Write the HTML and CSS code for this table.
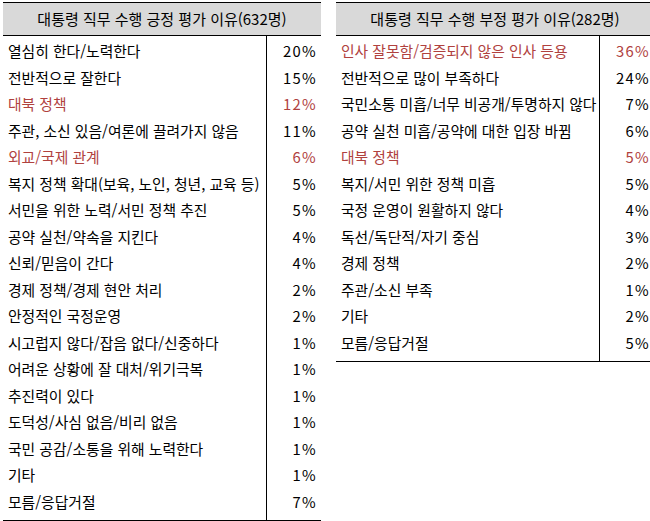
FILE: index.html
```html
<!DOCTYPE html>
<html lang="ko">
<head>
<meta charset="utf-8">
<link rel="stylesheet" href="styles.css">
</head>
<body>
<div class="page">
  <section class="tbl">
    <div class="head">대통령 직무 수행 긍정 평가 이유(632명)</div>
    <div class="body">
      <div class="col labels">
        <div class="row">열심히 한다/노력한다</div>
        <div class="row">전반적으로 잘한다</div>
        <div class="row red">대북 정책</div>
        <div class="row">주관, 소신 있음/여론에 끌려가지 않음</div>
        <div class="row red">외교/국제 관계</div>
        <div class="row">복지 정책 확대(보육, 노인, 청년, 교육 등)</div>
        <div class="row">서민을 위한 노력/서민 정책 추진</div>
        <div class="row">공약 실천/약속을 지킨다</div>
        <div class="row">신뢰/믿음이 간다</div>
        <div class="row">경제 정책/경제 현안 처리</div>
        <div class="row">안정적인 국정운영</div>
        <div class="row">시고럽지 않다/잡음 없다/신중하다</div>
        <div class="row">어려운 상황에 잘 대처/위기극복</div>
        <div class="row">추진력이 있다</div>
        <div class="row">도덕성/사심 없음/비리 없음</div>
        <div class="row">국민 공감/소통을 위해 노력한다</div>
        <div class="row">기타</div>
        <div class="row">모름/응답거절</div>
      </div>
      <div class="col values">
        <div class="row">20%</div>
        <div class="row">15%</div>
        <div class="row red">12%</div>
        <div class="row">11%</div>
        <div class="row red">6%</div>
        <div class="row">5%</div>
        <div class="row">5%</div>
        <div class="row">4%</div>
        <div class="row">4%</div>
        <div class="row">2%</div>
        <div class="row">2%</div>
        <div class="row">1%</div>
        <div class="row">1%</div>
        <div class="row">1%</div>
        <div class="row">1%</div>
        <div class="row">1%</div>
        <div class="row">1%</div>
        <div class="row">7%</div>
      </div>
    </div>
  </section>
  <section class="tbl">
    <div class="head">대통령 직무 수행 부정 평가 이유(282명)</div>
    <div class="body">
      <div class="col labels">
        <div class="row red">인사 잘못함/검증되지 않은 인사 등용</div>
        <div class="row">전반적으로 많이 부족하다</div>
        <div class="row">국민소통 미흡/너무 비공개/투명하지 않다</div>
        <div class="row">공약 실천 미흡/공약에 대한 입장 바뀜</div>
        <div class="row red">대북 정책</div>
        <div class="row">복지/서민 위한 정책 미흡</div>
        <div class="row">국정 운영이 원활하지 않다</div>
        <div class="row">독선/독단적/자기 중심</div>
        <div class="row">경제 정책</div>
        <div class="row">주관/소신 부족</div>
        <div class="row">기타</div>
        <div class="row">모름/응답거절</div>
      </div>
      <div class="col values">
        <div class="row red">36%</div>
        <div class="row">24%</div>
        <div class="row">7%</div>
        <div class="row">6%</div>
        <div class="row red">5%</div>
        <div class="row">5%</div>
        <div class="row">4%</div>
        <div class="row">3%</div>
        <div class="row">2%</div>
        <div class="row">1%</div>
        <div class="row">2%</div>
        <div class="row">5%</div>
      </div>
    </div>
  </section>
</div>
</body>
</html>
```
FILE: styles.css
```css
html, body {
  margin: 0;
  padding: 0;
  overflow: hidden;
  background: #fff;
}
body {
  font-family: "Noto Sans CJK KR", "Noto Sans", sans-serif;
  color: #000;
}
.page {
  display: flex;
  align-items: flex-start;
  gap: 15px;
  padding: 2px 0 0 3px;
  width: 700px;
}
.tbl {
  width: 318px;
  flex: none;
  border-bottom: 1px solid #000;
}
.head {
  height: 32px;
  line-height: 32px;
  background: #d9d9d9;
  border-top: 1px solid #000;
  border-bottom: 1px solid #000;
  text-align: center;
  font-size: 15px;
}
.body {
  display: flex;
}
.col {
  padding: 2px 0 4.5px;
}
.labels {
  width: 263px;
  border-right: 1px solid #000;
}
.values {
  width: 54px;
  text-align: right;
}
.row {
  height: 26.5px;
  line-height: 26.5px;
  font-size: 14.8px;
  white-space: nowrap;
}
.labels .row {
  padding-left: 5px;
}
.values .row {
  padding-right: 4px;
  letter-spacing: 1.3px;
}
.red {
  color: #b0413e;
}
```
